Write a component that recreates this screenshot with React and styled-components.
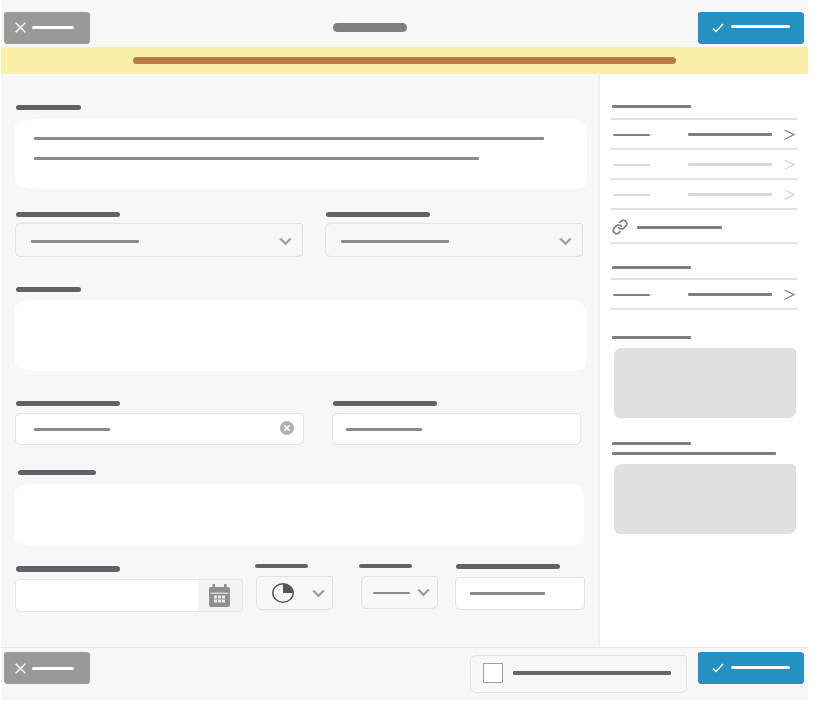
import React from "react";
import styled, { createGlobalStyle } from "styled-components";
import { Link as LinkIcon } from "lucide-react";

const Global = createGlobalStyle`
  html, body { margin: 0; padding: 0; background: #fff; }
  * { box-sizing: border-box; }
`;

const Root = styled.div`
  width: 807px;
  height: 700px;
  margin-left: 1px;
  display: flex;
  flex-direction: column;
  background: #f7f7f7;
`;
const Header = styled.header`
  height: 47px;
  flex: none;
  display: flex;
  align-items: center;
  justify-content: space-between;
  padding: 8px 4px 0 3px;
`;
const Title = styled.div`
  width: 74px;
  height: 9px;
  margin-right: 49px;
  border-radius: 5px;
  background: #808080;
`;
const ActionButton = styled.button`
  flex: none;
  width: ${(p) => (p.$primary ? 106 : 86)}px;
  height: 32px;
  padding: 0 ${(p) => (p.$primary ? 14 : 11)}px;
  border: 0;
  display: flex;
  align-items: center;
  gap: ${(p) => (p.$primary ? 7 : 6)}px;
  color: #fff;
  background: ${(p) => (p.$primary ? "#2590c2" : "#999")};
  border-radius: 3px 4px 3px 3px / 2px 3px 4px 4px;
`;
const ButtonLine = styled.span`
  display: block;
  width: ${(p) => p.$w}px;
  height: 3px;
  margin-top: ${(p) => p.$raise || 0}px;
  border-radius: 2px;
  background: #fff;
`;
const Banner = styled.div`
  height: 27px;
  flex: none;
  display: flex;
  align-items: center;
  justify-content: center;
  background: #faefaa;
`;
const BannerBar = styled.div`
  width: 543px;
  height: 7px;
  border-radius: 4px;
  background: #b87a40;
`;
const Main = styled.main`
  flex: 1;
  display: flex;
  min-height: 0;
`;
const Form = styled.section`
  width: 599px;
  flex: none;
  padding: 31px 0 0 14px;
  border-right: 2px solid #eee;
`;
const Side = styled.aside`
  flex: 1;
  padding: 31px 10px 0 11px;
  background: #fff;
`;
const Label = styled.div`
  width: ${(p) => p.$w}px;
  height: ${(p) => p.$h || 5}px;
  margin-left: ${(p) => p.$left ?? 1}px;
  margin-top: ${(p) => p.$top || 0}px;
  margin-bottom: ${(p) => p.$gap}px;
  border-radius: 3px;
  background: #5f6368;
`;
const TextArea = styled.div`
  width: ${(p) => p.$w}px;
  height: ${(p) => p.$h}px;
  margin-left: ${(p) => p.$left || 0}px;
  padding: 18px 0 0 19px;
  display: flex;
  flex-direction: column;
  gap: 17px;
  background: #fff;
  border-radius: 28px 14px 14px 26px / 8px 14px 8px 8px;
`;
const Line = styled.div`
  width: ${(p) => p.$w}px;
  height: ${(p) => p.$h || 3}px;
  flex: none;
  margin-top: ${(p) => p.$top || 0}px;
  border-radius: 1px;
  background: ${(p) => p.$color || "#8a8a8a"};
`;
const Block = styled.div`
  margin-top: ${(p) => p.$top || 0}px;
`;
const FieldRow = styled.div`
  display: flex;
  margin-top: ${(p) => p.$top}px;
`;
const Col = styled.div`
  width: ${(p) => p.$w}px;
  flex: none;
  margin-left: ${(p) => p.$left || 0}px;
`;
const Control = styled.div`
  height: ${(p) => p.$h}px;
  display: flex;
  align-items: center;
  justify-content: space-between;
  padding: ${(p) => p.$pt || 0}px ${(p) => p.$pr ?? 10}px 0 ${(p) => p.$pl ?? 15}px;
  background: ${(p) => (p.$white ? "#fff" : "#f7f7f7")};
  border: 1px solid #e2e2e2;
  border-radius: 6px 3px 7px 5px / 5px 3px 4px 6px;
`;
const DateControl = styled.div`
  height: 33px;
  display: flex;
  overflow: hidden;
  background: #f3f3f3;
  border: 1px solid #e6e6e6;
  border-radius: 6px 3px 5px 6px / 5px 3px 3px 6px;
`;
const DateInput = styled.div`
  width: 182px;
  flex: none;
  background: #fff;
`;
const DateAddon = styled.div`
  flex: 1;
  display: flex;
  align-items: center;
  justify-content: center;
  padding: 0 2px 1px 0;
`;
const ClearSlot = styled.div`
  display: flex;
  margin-top: -2px;
`;
const Footer = styled.footer`
  height: 53px;
  flex: none;
  display: flex;
  align-items: flex-start;
  padding: 4px 4px 0 3px;
  border-top: 1px solid #e6e6e6;
`;
const CheckFrame = styled.div`
  width: 217px;
  height: 38px;
  margin: 3px 11px 0 auto;
  padding: 0 14px 3px 12px;
  display: flex;
  align-items: center;
  gap: 10px;
  border: 1px solid #e4e4e4;
  border-radius: 6px 3px 7px 6px / 5px 3px 4px 6px;
`;
const CheckBox = styled.div`
  width: 20px;
  height: 20px;
  flex: none;
  background: #fff;
  border: 1px solid #a0a0a0;
`;
const SideLabel = styled.div`
  width: ${(p) => p.$w || 79}px;
  height: 3px;
  margin-left: 1px;
  margin-top: ${(p) => p.$top || 0}px;
  margin-bottom: ${(p) => p.$gap}px;
  border-radius: 1px;
  background: #808080;
`;
const List = styled.div`
  width: 186px;
  border-top: 2px solid #e2e2e2;
`;
const ListRow = styled.div`
  height: ${(p) => p.$h || 30}px;
  display: flex;
  align-items: center;
  padding: 2px 0 0 ${(p) => p.$pl || 2}px;
  border-bottom: 2px solid #e2e2e2;
`;
const RowValue = styled.div`
  width: 84px;
  height: 3px;
  margin-left: 38px;
  margin-right: 12px;
  margin-top: -2px;
  border-radius: 1px;
  background: ${(p) => p.$color};
`;
const GrayBox = styled.div`
  width: 182px;
  height: 70px;
  margin-left: 3px;
  background: #e0e0e0;
  border-radius: 8px 5px 8px 6px / 8px 4px 7px 6px;
`;
const LinkText = styled.div`
  width: 85px;
  height: 3px;
  margin-left: 9px;
  margin-top: 1px;
  border-radius: 1px;
  background: #808080;
`;

const CloseGlyph = () => (
  <svg width="11" height="11" viewBox="0 0 11 11" fill="none">
    <path d="M0.7 0.7l9.6 9.6M10.3 0.7L0.7 10.3" stroke="#fff" strokeWidth="1.4" />
  </svg>
);
const CheckGlyph = () => (
  <svg width="12" height="10" viewBox="0 0 12 10" fill="none">
    <path d="M1 5.5l3 3L11 1" stroke="#fff" strokeWidth="1.4" />
  </svg>
);
const Chevron = () => (
  <svg width="13" height="9" viewBox="0 0 13 9" fill="none">
    <path d="M1.2 1.5l5.3 5.3 5.3-5.3" stroke="#a0a0a0" strokeWidth="2.4" />
  </svg>
);
const ArrowGlyph = ({ color }) => (
  <svg width="11" height="12" viewBox="0 0 11 12" fill="none">
    <path d="M0.5 1l9.5 4.5-9.5 5" stroke={color} strokeWidth="1.3" />
  </svg>
);
const ClearGlyph = () => (
  <svg width="14" height="14" viewBox="0 0 14 14">
    <circle cx="7" cy="7" r="7" fill="#b0b0b0" />
    <path d="M4.3 4.3l5.4 5.4M9.7 4.3l-5.4 5.4" stroke="#fff" strokeWidth="1.6" />
  </svg>
);
const CalendarGlyph = () => (
  <svg width="21" height="23" viewBox="0 0 21 23">
    <rect x="0" y="3" width="21" height="20" rx="2" fill="#8f8f8f" />
    <rect x="3.5" y="0" width="2.6" height="5" fill="#8f8f8f" />
    <rect x="15" y="0" width="2.6" height="5" fill="#8f8f8f" />
    <rect x="1.5" y="8.5" width="18" height="1.4" fill="#d8d8d8" />
    <g fill="#ececec">
      <rect x="5" y="11.5" width="3" height="3" />
      <rect x="9" y="11.5" width="3" height="3" />
      <rect x="13" y="11.5" width="3" height="3" />
      <rect x="5" y="15.5" width="3" height="3" />
      <rect x="9" y="15.5" width="3" height="3" />
      <rect x="13" y="15.5" width="3" height="3" />
    </g>
  </svg>
);
const PieGlyph = () => (
  <svg width="22" height="20" viewBox="0 0 22 20">
    <ellipse cx="11" cy="10" rx="10.2" ry="9.2" fill="none" stroke="#555" strokeWidth="1.5" />
    <path d="M11 10V0.8A10.2 9.2 0 0 1 21.2 10Z" fill="#555" />
  </svg>
);

const Cancel = () => (
  <ActionButton>
    <CloseGlyph />
    <ButtonLine $w={42} />
  </ActionButton>
);
const Confirm = () => (
  <ActionButton $primary>
    <CheckGlyph />
    <ButtonLine $w={59} $raise={-2} />
  </ActionButton>
);

const Row = ({ muted }) => {
  const color = muted ? "#d8d8d8" : "#808080";
  return (
    <ListRow>
      <Line $w={37} $h={2} $color={color} />
      <RowValue $color={color} />
      <ArrowGlyph color={muted ? "#d4d4d4" : "#808080"} />
    </ListRow>
  );
};

export default function App() {
  return (
    <>
      <Global />
      <Root>
        <Header>
          <Cancel />
          <Title />
          <Confirm />
        </Header>
        <Banner>
          <BannerBar />
        </Banner>
        <Main>
          <Form>
            <Label $w={65} $gap={9} />
            <TextArea $w={572} $h={70}>
              <Line $w={510} />
              <Line $w={445} />
            </TextArea>

            <FieldRow $top={23}>
              <Col $w={288}>
                <Label $w={104} $gap={6} />
                <Control $h={34} $pt={2}>
                  <Line $w={108} />
                  <Chevron />
                </Control>
              </Col>
              <Col $w={258} $left={22}>
                <Label $w={104} $gap={6} />
                <Control $h={34} $pt={2}>
                  <Line $w={108} />
                  <Chevron />
                </Control>
              </Col>
            </FieldRow>

            <Block $top={30}>
              <Label $w={65} $gap={8} />
              <TextArea $w={571} $h={71} />
            </Block>

            <FieldRow $top={30}>
              <Col $w={289}>
                <Label $w={104} $gap={7} />
                <Control $h={32} $white $pl={18} $pr={9}>
                  <Line $w={76} />
                  <ClearSlot>
                    <ClearGlyph />
                  </ClearSlot>
                </Control>
              </Col>
              <Col $w={249} $left={28}>
                <Label $w={104} $gap={7} />
                <Control $h={32} $white $pl={13}>
                  <Line $w={76} />
                </Control>
              </Col>
            </FieldRow>

            <Block $top={25}>
              <Label $w={78} $left={3} $gap={9} />
              <TextArea $w={569} $h={62} />
            </Block>

            <FieldRow $top={18}>
              <Col $w={228}>
                <Label $w={104} $h={6} $top={2} $gap={7} />
                <DateControl>
                  <DateInput />
                  <DateAddon>
                    <CalendarGlyph />
                  </DateAddon>
                </DateControl>
              </Col>
              <Col $w={77} $left={13}>
                <Label $w={53} $h={4} $left={-1} $gap={8} />
                <Control $h={34} $pl={15} $pr={7}>
                  <PieGlyph />
                  <Chevron />
                </Control>
              </Col>
              <Col $w={77} $left={28}>
                <Label $w={53} $h={4} $left={-2} $gap={8} />
                <Control $h={33} $pl={11} $pr={7}>
                  <Line $w={37} $h={2} />
                  <Chevron />
                </Control>
              </Col>
              <Col $w={130} $left={17}>
                <Label $w={104} $gap={8} />
                <Control $h={33} $white $pl={14}>
                  <Line $w={75} />
                </Control>
              </Col>
            </FieldRow>
          </Form>

          <Side>
            <SideLabel $gap={10} />
            <List>
              <Row />
              <Row muted />
              <Row muted />
              <ListRow $h={34} $pl={1}>
                <LinkIcon size={16} color="#808080" strokeWidth={2.6} />
                <LinkText />
              </ListRow>
            </List>

            <SideLabel $top={22} $gap={9} />
            <List>
              <Row />
            </List>

            <SideLabel $top={26} $gap={9} />
            <GrayBox />

            <SideLabel $top={24} $gap={7} />
            <SideLabel $w={164} $gap={9} />
            <GrayBox />
          </Side>
        </Main>
        <Footer>
          <Cancel />
          <CheckFrame>
            <CheckBox />
            <Line $w={158} $h={4} $color="#666" />
          </CheckFrame>
          <Confirm />
        </Footer>
      </Root>
    </>
  );
}
